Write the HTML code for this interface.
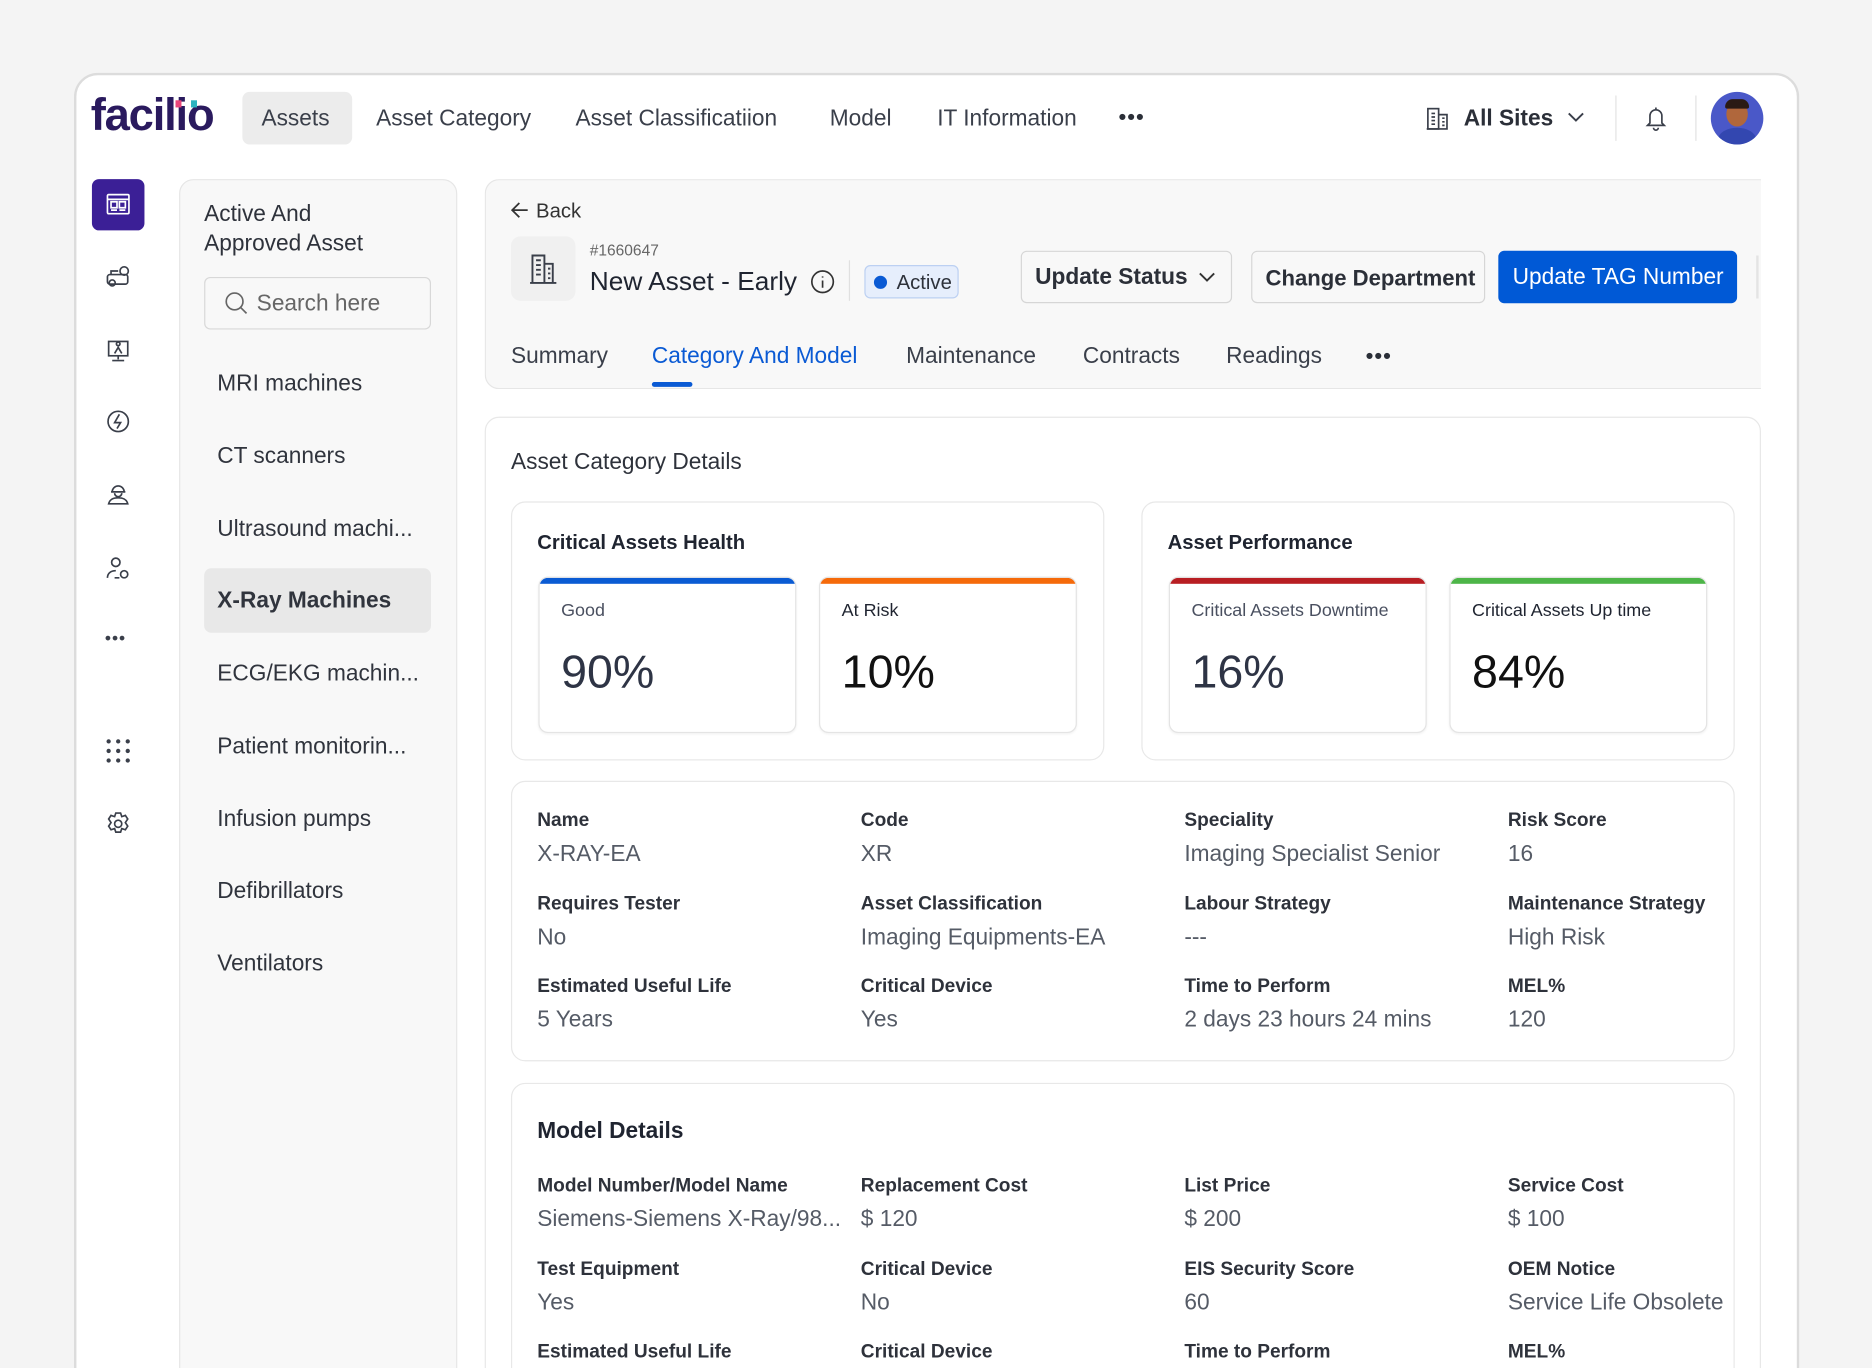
<!DOCTYPE html>
<html><head><meta charset="utf-8"><style>
*{box-sizing:border-box;margin:0;padding:0}
html,body{width:1872px;height:1368px;overflow:hidden;background:#f4f4f4;font-family:"Liberation Sans",Arial,sans-serif;color:#2b2f38}
#s{position:absolute;left:0;top:0;width:1568px;height:1146px;overflow:hidden;transform:scale(1.19388);transform-origin:0 0}
.a{position:absolute;white-space:nowrap}
.frame{position:absolute;left:62px;top:61px;width:1445px;height:1120px;background:#fff;border:2px solid #dcdcdc;border-radius:20px}
.nav{font-size:19px;color:#3a3f4a;top:89px}
.ic{position:absolute;left:88px;width:22px;height:22px}
.side-item{position:absolute;left:182px;font-size:19px;color:#30343d}
.panel{position:absolute;background:#f8f8f8;border:1px solid #e6e6e6;border-radius:12px}
.btn{position:absolute;top:210px;height:44px;border:1px solid #d6d6d6;border-radius:5px;background:#f8f8f8;font-size:19px;font-weight:600;color:#2b2f38;line-height:44px;padding-left:11px}
.tab{position:absolute;top:288px;font-size:19px;color:#3a3f4a}
.card{position:absolute;background:#fff;border:1px solid #e8e8e8;border-radius:12px}
.mini{position:absolute;top:483px;width:216px;height:131px;background:#fff;border:1px solid #e4e4e4;border-radius:8px;overflow:hidden;box-shadow:0 1px 2px rgba(0,0,0,.05)}
.mini .bar{height:5px}
.mini .l{position:absolute;left:18px;top:19px;font-size:15px;color:#4a5060}
.mini .n{position:absolute;left:18px;top:58px;font-size:39px;color:#1e2230}
.lab{position:absolute;font-size:16px;font-weight:600;color:#2e323b}
.val{position:absolute;font-size:19px;color:#555b66}
</style></head><body><div id="s">
<div class="frame"></div>
<div class="a" style="left:76px;top:76px;font-size:38px;font-weight:700;color:#2a1a5e;letter-spacing:-1px">facilio</div>
<div class="a" style="left:147px;top:84px;width:5px;height:6px;background:#e8457a"></div>
<div class="a" style="left:160px;top:84px;width:5px;height:6px;background:#2bb3c0"></div>
<div class="a" style="left:203px;top:77px;width:92px;height:44px;background:#ececec;border-radius:6px"></div>
<div class="a nav" style="left:219px">Assets</div>
<div class="a nav" style="left:315px">Asset Category</div>
<div class="a nav" style="left:482px">Asset Classificatiion</div>
<div class="a nav" style="left:695px">Model</div>
<div class="a nav" style="left:785px">IT Information</div>
<div class="a" style="left:937px;top:88px;font-size:18px;font-weight:700;letter-spacing:1px">•••</div>
<svg class="a" style="left:1193px;top:88px" width="22" height="22" viewBox="0 0 22 22" fill="none" stroke="#3a3f4a" stroke-width="1.4"><rect x="3" y="3" width="9" height="17"/><path d="M12 8h7v12H2M6 7h3M6 10h3M6 13h3M6 16h3M15 11h2M15 14h2M15 17h2"/></svg>
<div class="a" style="left:1226px;top:89px;font-size:19px;font-weight:600">All Sites</div>
<svg class="a" style="left:1311px;top:91px" width="18" height="14" viewBox="0 0 18 14" fill="none" stroke="#3a3f4a" stroke-width="1.6"><path d="M3 4l6 6 6-6"/></svg>
<div class="a" style="left:1353px;top:80px;width:1px;height:38px;background:#e2e2e2"></div>
<svg class="a" style="left:1377px;top:88px" width="20" height="22" viewBox="0 0 20 22" fill="none" stroke="#3a3f4a" stroke-width="1.4"><path d="M5 15V9a5 5 0 0110 0v6l2 2H3zM8 19a2 2 0 004 0M10 2v2"/></svg>
<div class="a" style="left:1420px;top:80px;width:1px;height:38px;background:#e2e2e2"></div>
<div class="a" style="left:1433px;top:77px;width:44px;height:44px;border-radius:50%;background:#4a58c8;overflow:hidden">
<div class="a" style="left:13px;top:8px;width:18px;height:21px;border-radius:50%;background:#b0673c"></div>
<div class="a" style="left:12px;top:6px;width:20px;height:8px;border-radius:8px 8px 2px 2px;background:#2a1a14"></div>
<div class="a" style="left:6px;top:30px;width:32px;height:20px;border-radius:50%;background:#3347b0"></div></div>
<div class="a" style="left:77px;top:150px;width:44px;height:43px;background:#3b1f96;border-radius:6px"></div>
<svg class="a" style="left:88px;top:160px" width="22" height="22" viewBox="0 0 22 22" fill="none" stroke="#fff" stroke-width="1.4"><rect x="2" y="3" width="18" height="16" rx="1"/><path d="M2 7h18M5 9h5v5H5zM12 9h5v5h-5zM5 16h5M12 16h5"/></svg>
<svg class="ic" style="top:221px" viewBox="0 0 22 22" fill="none" stroke="#3a3f4a" stroke-width="1.4"><rect x="2" y="9" width="17" height="8" rx="2"/><circle cx="6" cy="16" r="2.5"/><path d="M5 9V6h6"/><circle cx="16" cy="6" r="3.5"/></svg>
<svg class="ic" style="top:282px" viewBox="0 0 22 22" fill="none" stroke="#3a3f4a" stroke-width="1.4"><rect x="3" y="4" width="16" height="12"/><path d="M11 16v3M6 20h10"/><circle cx="11" cy="6" r="1.5"/><path d="M8 14l3-5 3 5"/></svg>
<svg class="ic" style="top:342px" viewBox="0 0 22 22" fill="none" stroke="#3a3f4a" stroke-width="1.4"><circle cx="11" cy="11" r="8.5"/><path d="M12 5l-4 7h5l-3 5"/></svg>
<svg class="ic" style="top:403px" viewBox="0 0 22 22" fill="none" stroke="#3a3f4a" stroke-width="1.4"><path d="M6 9a5 5 0 0110 0zM5 9h12M8 10a3 3 0 006 0M3 19c1-4 4-5 8-5s7 1 8 5z"/></svg>
<svg class="ic" style="top:465px" viewBox="0 0 22 22" fill="none" stroke="#3a3f4a" stroke-width="1.4"><circle cx="9" cy="6" r="3.5"/><path d="M2 19c0-4 3-6 7-6M8 19h4"/><circle cx="16" cy="16" r="3"/></svg>
<div class="a" style="left:88px;top:526px;font-size:14px;font-weight:700;letter-spacing:1px;color:#3a3f4a">•••</div>
<svg class="ic" style="top:618px" viewBox="0 0 22 22" fill="#3a3f4a"><circle cx="3" cy="3" r="1.8"/><circle cx="11" cy="3" r="1.8"/><circle cx="19" cy="3" r="1.8"/><circle cx="3" cy="11" r="1.8"/><circle cx="11" cy="11" r="1.8"/><circle cx="19" cy="11" r="1.8"/><circle cx="3" cy="19" r="1.8"/><circle cx="11" cy="19" r="1.8"/><circle cx="19" cy="19" r="1.8"/></svg>
<svg class="ic" style="top:679px" viewBox="0 0 22 22" fill="none" stroke="#3a3f4a" stroke-width="1.4"><circle cx="11" cy="11" r="3"/><path d="M9 2h4l1 3 3-1 2 3-2 3 2 3-2 3-3-1-1 3H9l-1-3-3 1-2-3 2-3-2-3 2-3 3 1z"/></svg>
<div class="panel" style="left:150px;top:150px;width:233px;height:1010px"></div>
<div class="a" style="left:171px;top:167px;font-size:19px;line-height:25px;color:#2e323b">Active And<br>Approved Asset</div>
<div class="a" style="left:171px;top:232px;width:190px;height:44px;border:1px solid #d8d8d8;border-radius:5px;background:#f8f8f8"></div>
<svg class="a" style="left:187px;top:243px" width="22" height="22" viewBox="0 0 22 22" fill="none" stroke="#666" stroke-width="1.4"><circle cx="9.5" cy="9.5" r="7"/><path d="M14.5 14.5l5 5"/></svg>
<div class="a" style="left:215px;top:244px;font-size:19px;color:#666">Search here</div>
<div class="a" style="left:171px;top:476px;width:190px;height:54px;background:#e8e8e8;border-radius:6px"></div>
<div class="side-item" style="top:311px">MRI machines</div>
<div class="side-item" style="top:372px">CT scanners</div>
<div class="side-item" style="top:433px">Ultrasound machi...</div>
<div class="side-item" style="top:493px;font-weight:600">X-Ray Machines</div>
<div class="side-item" style="top:554px">ECG/EKG machin...</div>
<div class="side-item" style="top:615px">Patient monitorin...</div>
<div class="side-item" style="top:676px">Infusion pumps</div>
<div class="side-item" style="top:736px">Defibrillators</div>
<div class="side-item" style="top:797px">Ventilators</div>
<div class="panel" style="left:406px;top:150px;width:1069px;height:176px;border-right:none;border-radius:12px 0 0 12px"></div>
<svg class="a" style="left:427px;top:168px" width="17" height="16" viewBox="0 0 17 16" fill="none" stroke="#333" stroke-width="1.5"><path d="M15 8H2M8 2L2 8l6 6"/></svg>
<div class="a" style="left:449px;top:167px;font-size:17px;color:#333">Back</div>
<div class="a" style="left:428px;top:198px;width:54px;height:54px;background:#f0f0f0;border-radius:8px"></div>
<svg class="a" style="left:441px;top:211px" width="28" height="28" viewBox="0 0 28 28" fill="none" stroke="#3a3f4a" stroke-width="1.6"><path d="M3 26h22M5 26V3h10v23M15 10h7v16M8 7h4M8 11h4M8 15h4M8 19h4M18 14h2M18 18h2M18 22h2"/></svg>
<div class="a" style="left:494px;top:202px;font-size:13px;color:#666">#1660647</div>
<div class="a" style="left:494px;top:223px;font-size:22px;color:#1f2430">New Asset - Early</div>
<svg class="a" style="left:678px;top:225px" width="22" height="22" viewBox="0 0 22 22" fill="none" stroke="#333" stroke-width="1.4"><circle cx="11" cy="11" r="9"/><path d="M11 10v6M11 6.5v1"/></svg>
<div class="a" style="left:711px;top:218px;width:1px;height:34px;background:#e0e0e0"></div>
<div class="a" style="left:724px;top:222px;width:79px;height:28px;background:#e6eefc;border:1px solid #bcd0f2;border-radius:5px"></div>
<div class="a" style="left:732px;top:231px;width:11px;height:11px;border-radius:50%;background:#0a5ad4"></div>
<div class="a" style="left:751px;top:227px;font-size:17px;color:#2e323b">Active</div>
<div class="btn" style="left:855px;width:177px">Update Status
<svg style="position:absolute;left:147px;top:14px" width="16" height="14" viewBox="0 0 16 14" fill="none" stroke="#333" stroke-width="1.6"><path d="M2 4l6 6 6-6"/></svg></div>
<div class="btn" style="left:1048px;width:196px;font-size:18.5px">Change Department</div>
<div class="btn" style="left:1255px;width:200px;background:#0059d6;border-color:#0059d6;color:#fff;font-weight:400">Update TAG Number</div>
<div class="a" style="left:1471px;top:214px;width:2px;height:36px;background:#e4e4e4"></div>
<div class="tab" style="left:428px">Summary</div>
<div class="tab" style="left:546px;color:#0a5ad4">Category And Model</div>
<div class="a" style="left:546px;top:320px;width:34px;height:4px;background:#0a5ad4;border-radius:2px"></div>
<div class="tab" style="left:759px">Maintenance</div>
<div class="tab" style="left:907px">Contracts</div>
<div class="tab" style="left:1027px">Readings</div>
<div class="a" style="left:1144px;top:288px;font-size:18px;font-weight:700;letter-spacing:1px">•••</div>
<div class="card" style="left:406px;top:349px;width:1069px;height:840px"></div>
<div class="a" style="left:428px;top:377px;font-size:19px;color:#2e323b">Asset Category Details</div>
<div class="card" style="left:428px;top:420px;width:497px;height:217px"></div>
<div class="card" style="left:956px;top:420px;width:497px;height:217px"></div>
<div class="a" style="left:450px;top:445px;font-size:17px;font-weight:600;color:#1f2430">Critical Assets Health</div>
<div class="a" style="left:978px;top:445px;font-size:17px;font-weight:600;color:#1f2430">Asset Performance</div>
<div class="mini" style="left:451px"><div class="bar" style="background:#0a5bd3"></div><div class="l">Good</div><div class="n" style="color:#2e3445">90%</div></div>
<div class="mini" style="left:686px"><div class="bar" style="background:#f56a0a"></div><div class="l" style="color:#1f2430">At Risk</div><div class="n" style="color:#111">10%</div></div>
<div class="mini" style="left:979px"><div class="bar" style="background:#b81e23"></div><div class="l">Critical Assets Downtime</div><div class="n" style="color:#2e3445">16%</div></div>
<div class="mini" style="left:1214px"><div class="bar" style="background:#4db548"></div><div class="l" style="color:#1f2430">Critical Assets Up time</div><div class="n" style="color:#111">84%</div></div>
<div class="card" style="left:428px;top:654px;width:1025px;height:235px"></div>
<div class="lab" style="left:450px;top:679px">Name</div><div class="val" style="left:450px;top:705px">X-RAY-EA</div>
<div class="lab" style="left:721px;top:679px">Code</div><div class="val" style="left:721px;top:705px">XR</div>
<div class="lab" style="left:992px;top:679px">Speciality</div><div class="val" style="left:992px;top:705px">Imaging Specialist Senior</div>
<div class="lab" style="left:1263px;top:679px">Risk Score</div><div class="val" style="left:1263px;top:705px">16</div>
<div class="lab" style="left:450px;top:749px">Requires Tester</div><div class="val" style="left:450px;top:775px">No</div>
<div class="lab" style="left:721px;top:749px">Asset Classification</div><div class="val" style="left:721px;top:775px">Imaging Equipments-EA</div>
<div class="lab" style="left:992px;top:749px">Labour Strategy</div><div class="val" style="left:992px;top:775px">---</div>
<div class="lab" style="left:1263px;top:749px">Maintenance Strategy</div><div class="val" style="left:1263px;top:775px">High Risk</div>
<div class="lab" style="left:450px;top:818px">Estimated Useful Life</div><div class="val" style="left:450px;top:844px">5 Years</div>
<div class="lab" style="left:721px;top:818px">Critical Device</div><div class="val" style="left:721px;top:844px">Yes</div>
<div class="lab" style="left:992px;top:818px">Time to Perform</div><div class="val" style="left:992px;top:844px">2 days 23 hours 24 mins</div>
<div class="lab" style="left:1263px;top:818px">MEL%</div><div class="val" style="left:1263px;top:844px">120</div>
<div class="card" style="left:428px;top:907px;width:1025px;height:280px"></div>
<div class="a" style="left:450px;top:937px;font-size:19px;font-weight:600;color:#1f2430">Model Details</div>
<div class="lab" style="left:450px;top:985px">Model Number/Model Name</div><div class="val" style="left:450px;top:1011px">Siemens-Siemens X-Ray/98...</div>
<div class="lab" style="left:721px;top:985px">Replacement Cost</div><div class="val" style="left:721px;top:1011px">$ 120</div>
<div class="lab" style="left:992px;top:985px">List Price</div><div class="val" style="left:992px;top:1011px">$ 200</div>
<div class="lab" style="left:1263px;top:985px">Service Cost</div><div class="val" style="left:1263px;top:1011px">$ 100</div>
<div class="lab" style="left:450px;top:1055px">Test Equipment</div><div class="val" style="left:450px;top:1081px">Yes</div>
<div class="lab" style="left:721px;top:1055px">Critical Device</div><div class="val" style="left:721px;top:1081px">No</div>
<div class="lab" style="left:992px;top:1055px">EIS Security Score</div><div class="val" style="left:992px;top:1081px">60</div>
<div class="lab" style="left:1263px;top:1055px">OEM Notice</div><div class="val" style="left:1263px;top:1081px">Service Life Obsolete</div>
<div class="lab" style="left:450px;top:1124px">Estimated Useful Life</div>
<div class="lab" style="left:721px;top:1124px">Critical Device</div>
<div class="lab" style="left:992px;top:1124px">Time to Perform</div>
<div class="lab" style="left:1263px;top:1124px">MEL%</div>
</div></body></html>
